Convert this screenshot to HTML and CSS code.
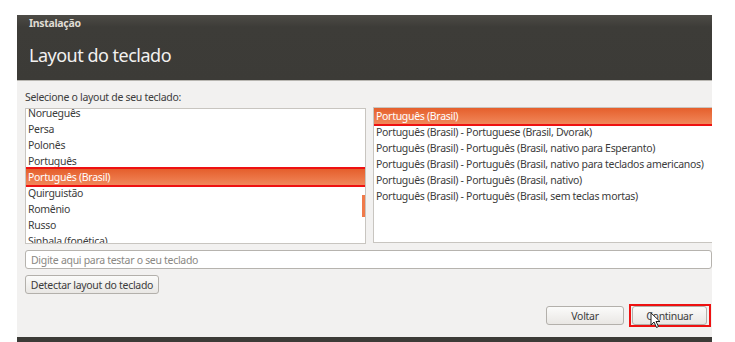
FILE: index.html
```html
<!DOCTYPE html>
<html lang="pt-BR">
<head>
    <meta charset="UTF-8">
    <meta name="viewport" content="width=device-width, initial-scale=1.0">
    <title>Instalação</title>
    <link rel="stylesheet" href="styles.css">
</head>
<body>

    <div class="window">
        <div class="titlebar">
            <div class="app-name">Instalação</div>
            <h1>Layout do teclado</h1>
        </div>

        <div class="content">
            <div class="prompt">Selecione o layout de seu teclado:</div>

            <div class="lists">
                <div class="list list-layouts">
                    <div class="rows">
                        <div class="row">Norueguês</div>
                        <div class="row">Persa</div>
                        <div class="row">Polonês</div>
                        <div class="row">Português</div>
                        <div class="row selected">Português (Brasil)</div>
                        <div class="row">Quirguistão</div>
                        <div class="row">Romênio</div>
                        <div class="row">Russo</div>
                        <div class="row">Sinhala (fonética)</div>
                    </div>
                    <div class="scroll-thumb"></div>
                </div>

                <div class="list list-variants">
                    <div class="rows">
                        <div class="row selected">Português (Brasil)</div>
                        <div class="row">Português (Brasil) - Portuguese (Brasil, Dvorak)</div>
                        <div class="row">Português (Brasil) - Português (Brasil, nativo para Esperanto)</div>
                        <div class="row">Português (Brasil) - Português (Brasil, nativo para teclados americanos)</div>
                        <div class="row">Português (Brasil) - Português (Brasil, nativo)</div>
                        <div class="row">Português (Brasil) - Português (Brasil, sem teclas mortas)</div>
                    </div>
                </div>
            </div>

            <input type="text" class="test-field" placeholder="Digite aqui para testar o seu teclado" />
            <div><button class="btn btn-detect">Detectar layout do teclado</button></div>

            <div class="nav">
                <button class="btn btn-nav">Voltar</button>
                <span class="marked"><button class="btn btn-nav">Continuar</button></span>
                <!-- ponteiro do mouse -->
                <svg class="cursor" width="12" height="17" viewBox="0 0 12 17">
                    <path d="M1 1 L1 13 L4 10 L6.5 15.5 L8.5 14.5 L6 9.5 L10 9.5 Z" fill="#ffffff" stroke="#222222" stroke-width="1" stroke-linejoin="round"/>
                </svg>
            </div>
        </div>

        <div class="bottom-bar"></div>
    </div>

</body>
</html>
```

FILE: styles.css
```css
body {
    margin: 0;
    background: #ffffff;
    font-family: 'Noto Sans', 'DejaVu Sans', sans-serif;
    font-size: 10.5px;
    letter-spacing: -0.3px;
    color: #3c3c3c;
}

.window {
    margin: 15px 0 0 17px;
    width: 695px;
    height: 327px;
    overflow: hidden;
    background: #f2f1f0;
    display: flex;
    flex-direction: column;
}

.titlebar {
    height: 65px;
    flex-shrink: 0;
    padding-left: 12px;
    background: linear-gradient(to bottom, #4d4b46 0px, #3d3c38 12px, #3c3b37 100%);
    border-bottom: 1px solid #b8b6b1;
    color: #f2f1f0;
}

.app-name {
    font-weight: bold;
    font-size: 10.5px;
    line-height: 16px;
    color: #dfdbd2;
}

h1 {
    margin: 12px 0 0;
    font-weight: normal;
    font-size: 18px;
    letter-spacing: -0.5px;
    line-height: 24px;
    color: #f2f1f0;
}

.content {
    flex: 1;
    display: flex;
    flex-direction: column;
    padding-left: 8px;
}

.prompt {
    line-height: 16px;
    margin-top: 8px;
    margin-bottom: 3px;
}

.lists {
    display: flex;
    gap: 7px;
    height: 136px;
    width: 720px;
}

.list {
    position: relative;
    background: #ffffff;
    border: 1px solid #c8c5c0;
    overflow: hidden;
    box-sizing: border-box;
    height: 136px;
}

.list-layouts {
    width: 341px;
}

.list-layouts .rows {
    margin-top: -4px;
}

.list-variants {
    width: 372px;
    margin-top: -1px;
}

.row {
    height: 16px;
    line-height: 16px;
    padding-left: 2px;
    white-space: nowrap;
}

.row.selected {
    background: linear-gradient(to bottom, #e55f2c, #f1875a);
    color: #ffffff;
    outline: 2px solid #ee1111;
}

.list-layouts .row.selected {
    margin-left: -1px;
    margin-right: -1px;
    padding-left: 3px;
}

.scroll-thumb {
    position: absolute;
    left: 336px;
    top: 86px;
    width: 3px;
    height: 22px;
    background: #f07a4a;
}

.test-field {
    margin-top: 6px;
    width: 687px;
    height: 19px;
    box-sizing: border-box;
    border: 1px solid #b6b3ae;
    border-radius: 3px;
    padding: 0 5px;
    font-family: inherit;
    font-size: 10.5px;
    letter-spacing: -0.3px;
    color: #3c3c3c;
    background: #ffffff;
    outline: none;
}

.test-field::placeholder {
    color: #8a8883;
}

.btn {
    font-family: inherit;
    font-size: 10.5px;
    letter-spacing: -0.3px;
    color: #3c3c3c;
    height: 19px;
    padding: 0 4px;
    border: 1px solid #b3b0ab;
    border-radius: 3px;
    background: linear-gradient(to bottom, #fbfbfa, #e9e7e4);
    box-sizing: border-box;
    white-space: nowrap;
    cursor: pointer;
}

.btn-detect {
    margin-top: 6px;
    width: 134px;
    padding: 0;
}

.nav {
    position: relative;
    display: flex;
    justify-content: flex-end;
    align-items: flex-start;
    gap: 5px;
    margin-top: 10px;
    padding-right: 1px;
}

.btn-nav {
    width: 78px;
    margin-top: 2px;
}

.marked {
    display: flex;
    border: 2px solid #ee1111;
    padding: 0 2px 0 1px;
}

.marked .btn-nav {
    width: 75px;
    margin-top: 0;
}

.cursor {
    position: absolute;
    left: 625px;
    top: 8px;
}

.bottom-bar {
    height: 5px;
    flex-shrink: 0;
    background: #3c3b37;
}
```
